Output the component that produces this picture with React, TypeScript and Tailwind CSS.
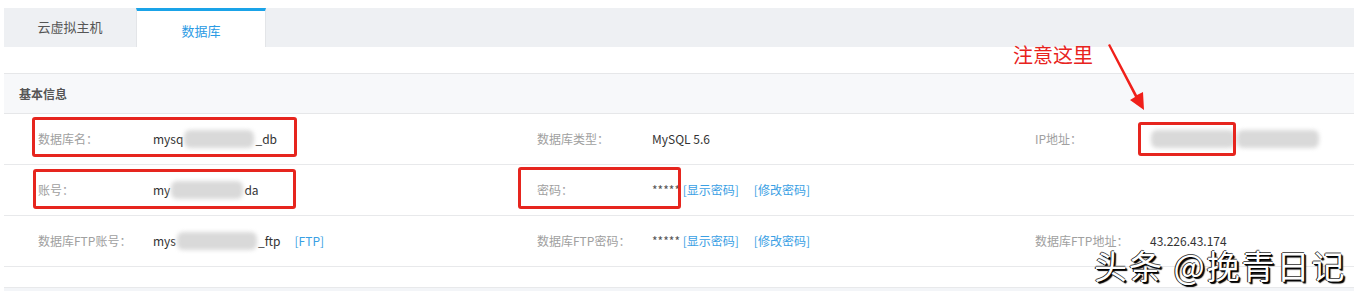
const font = { fontFamily: '"Noto Sans CJK SC", "Noto Sans", sans-serif' };

function Blur({ w }: { w: number }) {
  return (
    <span
      className="mx-[1px] inline-block h-[18px] rounded-[6px] bg-[#d9d9d9] align-middle blur-[2px]"
      style={{ width: w }}
    />
  );
}

function Link({ children }: { children: React.ReactNode }) {
  return <span className="text-[#3aa0e4]">{children}</span>;
}

function Cell({ label, children }: { label: string; children?: React.ReactNode }) {
  return (
    <div className="flex items-center pl-[34px]">
      <span className="w-[115px] shrink-0 whitespace-nowrap text-[#a0a0a0]">{label}</span>
      <span className="flex items-center whitespace-nowrap text-[#333]">{children}</span>
    </div>
  );
}

function Row({ children }: { children: React.ReactNode }) {
  return (
    <div className="grid h-[51px] grid-cols-[499px_498px_1fr] border-b border-[#e8e9eb] text-[12px]">
      {children}
    </div>
  );
}

function RedBox({ className }: { className: string }) {
  return <div className={`absolute rounded-[3px] border-[3px] border-[#e6251e] ${className}`} />;
}

export default function App() {
  return (
    <div className="relative h-[291px] w-[1354px] overflow-hidden bg-white" style={font}>
      <div className="pt-[8px] pl-[4px]">
        <div className="flex h-[39px] bg-[#eef0f3] text-[13px]">
          <div className="flex w-[132px] items-center justify-center pb-[2px] text-[#555]">云虚拟主机</div>
          <div className="flex w-[130px] items-center justify-center border-x border-[#e3e5e8] border-t-[3px] border-t-[#1aa3e8] bg-white pt-[3px] text-[#2b9be4]">
            数据库
          </div>
        </div>
      </div>

      <div className="mt-[26px] ml-[4px]">
        <div className="flex h-[41px] items-center border-y border-[#e6e7e9] bg-[#f7f8fa] pl-[15px] text-[12px] font-bold text-[#555]">
          基本信息
        </div>
        <Row>
          <Cell label="数据库名：">
            mysq<Blur w={70} />_db
          </Cell>
          <Cell label="数据库类型：">MySQL 5.6</Cell>
          <Cell label="IP地址：">
            <Blur w={84} />
            <Blur w={82} />
          </Cell>
        </Row>
        <Row>
          <Cell label="账号：">
            my<Blur w={72} />da
          </Cell>
          <Cell label="密码：">
            <span className="text-[#555]">*****</span>&nbsp;<Link>[显示密码]</Link>
            <span className="w-[15px]" />
            <Link>[修改密码]</Link>
          </Cell>
          <div />
        </Row>
        <Row>
          <Cell label="数据库FTP账号：">
            mys<Blur w={80} />_ftp
            <span className="w-[14px]" />
            <Link>[FTP]</Link>
          </Cell>
          <Cell label="数据库FTP密码：">
            <span className="text-[#555]">*****</span>&nbsp;<Link>[显示密码]</Link>
            <span className="w-[15px]" />
            <Link>[修改密码]</Link>
          </Cell>
          <Cell label="数据库FTP地址：">43.226.43.174</Cell>
        </Row>
        <div className="h-[21px] border-b border-[#e8e9eb]" />
        <div className="h-[10px] bg-[#f3f5f8]" />
      </div>

      <RedBox className="left-[32px] top-[117px] h-[40px] w-[265px]" />
      <RedBox className="left-[33px] top-[169px] h-[40px] w-[263px]" />
      <RedBox className="left-[518px] top-[167px] h-[42px] w-[163px]" />
      <RedBox className="left-[1138px] top-[122px] h-[34px] w-[98px]" />

      <div className="absolute left-[1013px] top-[41px] text-[20px] leading-[28px] text-[#e8231d]">注意这里</div>
      <svg className="absolute left-[1100px] top-[40px]" width="60" height="80" viewBox="0 0 60 80">
        <polygon points="8,5 10,4 37,55 43,52 44,70 30,60 35,57" fill="#f0201a" />
      </svg>

      <div
        className="absolute left-[1094px] top-[245px] text-[33px] leading-[40px] tracking-[2px] text-white"
        style={{ textShadow: "1px 1px 0 #000, -1px 0 0 #222, 0 -1px 0 #555, 2px 2px 1px #000" }}
      >
        头条 @挽青日记
      </div>
    </div>
  );
}
